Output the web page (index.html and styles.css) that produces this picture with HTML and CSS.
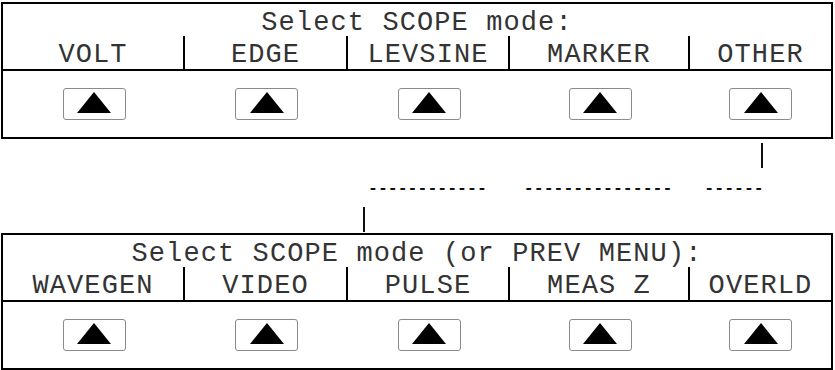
FILE: index.html
```html
<!DOCTYPE html>
<html lang="en">
<head>
  <meta charset="UTF-8">
  <title>Select SCOPE mode</title>
  <link rel="stylesheet" href="styles.css">
</head>
<body>

  <div class="panel">
    <div class="title">Select SCOPE mode:</div>
    <div class="labels">
      <div class="label">VOLT</div>
      <div class="label">EDGE</div>
      <div class="label">LEVSINE</div>
      <div class="label">MARKER</div>
      <div class="label">OTHER</div>
    </div>
    <div class="keys">
      <div class="key"><span class="softkey"><svg width="34" height="21" viewBox="0 0 34 21"><polygon points="17,0 34,21 0,21"/></svg></span></div>
      <div class="key"><span class="softkey"><svg width="34" height="21" viewBox="0 0 34 21"><polygon points="17,0 34,21 0,21"/></svg></span></div>
      <div class="key"><span class="softkey"><svg width="34" height="21" viewBox="0 0 34 21"><polygon points="17,0 34,21 0,21"/></svg></span></div>
      <div class="key"><span class="softkey"><svg width="34" height="21" viewBox="0 0 34 21"><polygon points="17,0 34,21 0,21"/></svg></span></div>
      <div class="key"><span class="softkey"><svg width="34" height="21" viewBox="0 0 34 21"><polygon points="17,0 34,21 0,21"/></svg></span></div>
    </div>
  </div>

  <div class="connector">
    <div class="vline out"></div>
    <div class="dashes">
      <span class="dash-a">------------</span>
      <span class="dash-b">---------------</span>
      <span class="dash-c">------</span>
    </div>
    <div class="vline in"></div>
  </div>

  <div class="panel">
    <div class="title">Select SCOPE mode (or PREV MENU):</div>
    <div class="labels">
      <div class="label">WAVEGEN</div>
      <div class="label">VIDEO</div>
      <div class="label">PULSE</div>
      <div class="label">MEAS Z</div>
      <div class="label">OVERLD</div>
    </div>
    <div class="keys">
      <div class="key"><span class="softkey"><svg width="34" height="21" viewBox="0 0 34 21"><polygon points="17,0 34,21 0,21"/></svg></span></div>
      <div class="key"><span class="softkey"><svg width="34" height="21" viewBox="0 0 34 21"><polygon points="17,0 34,21 0,21"/></svg></span></div>
      <div class="key"><span class="softkey"><svg width="34" height="21" viewBox="0 0 34 21"><polygon points="17,0 34,21 0,21"/></svg></span></div>
      <div class="key"><span class="softkey"><svg width="34" height="21" viewBox="0 0 34 21"><polygon points="17,0 34,21 0,21"/></svg></span></div>
      <div class="key"><span class="softkey"><svg width="34" height="21" viewBox="0 0 34 21"><polygon points="17,0 34,21 0,21"/></svg></span></div>
    </div>
  </div>

</body>
</html>
```

FILE: styles.css
```css
* {
  box-sizing: border-box;
}

body {
  margin: 0;
  padding: 2px 0 0 1px;
  background: #fff;
  color: #333;
  font-family: 'Liberation Mono', 'Courier New', monospace;
  font-size: 27px;
  letter-spacing: 1.1px;
}

.panel {
  width: 832px;
  height: 137px;
  border: 2px solid #000;
}

.title {
  height: 32px;
  padding-top: 3px;
  line-height: 32px;
  text-align: center;
  white-space: pre;
}

.labels,
.keys {
  display: grid;
  grid-template-columns: 182px 163px 162px 180px 1fr;
}

.labels {
  height: 35px;
  border-bottom: 2px solid #000;
}

.label {
  height: 33px;
  padding-top: 3px;
  line-height: 32px;
  text-align: center;
  white-space: pre;
  border-right: 2px solid #000;
}

.label:last-child {
  border-right: none;
}

.key {
  display: flex;
  justify-content: center;
  padding-top: 17px;
  height: 66px;
}

.softkey {
  display: flex;
  justify-content: center;
  width: 63px;
  height: 32px;
  padding-top: 3px;
  border: 1px solid #8a8a8a;
  border-radius: 3px;
}

.softkey svg {
  display: block;
}

/* lines joining the two menus */
.connector {
  height: 94px;
  padding-top: 4px;
}

.vline {
  width: 2px;
  height: 25px;
  background: #111;
}

.vline.out {
  margin-left: 760px;
}

.vline.in {
  margin-left: 362px;
}

.dashes {
  display: flex;
  height: 39px;
  padding: 3px 0 0 367px;
  color: #111;
  font-size: 16.5px;
  letter-spacing: 0;
  line-height: 36px;
  font-weight: bold;
}

.dash-b {
  margin-left: 37px;
}

.dash-c {
  margin-left: 32px;
}
```
